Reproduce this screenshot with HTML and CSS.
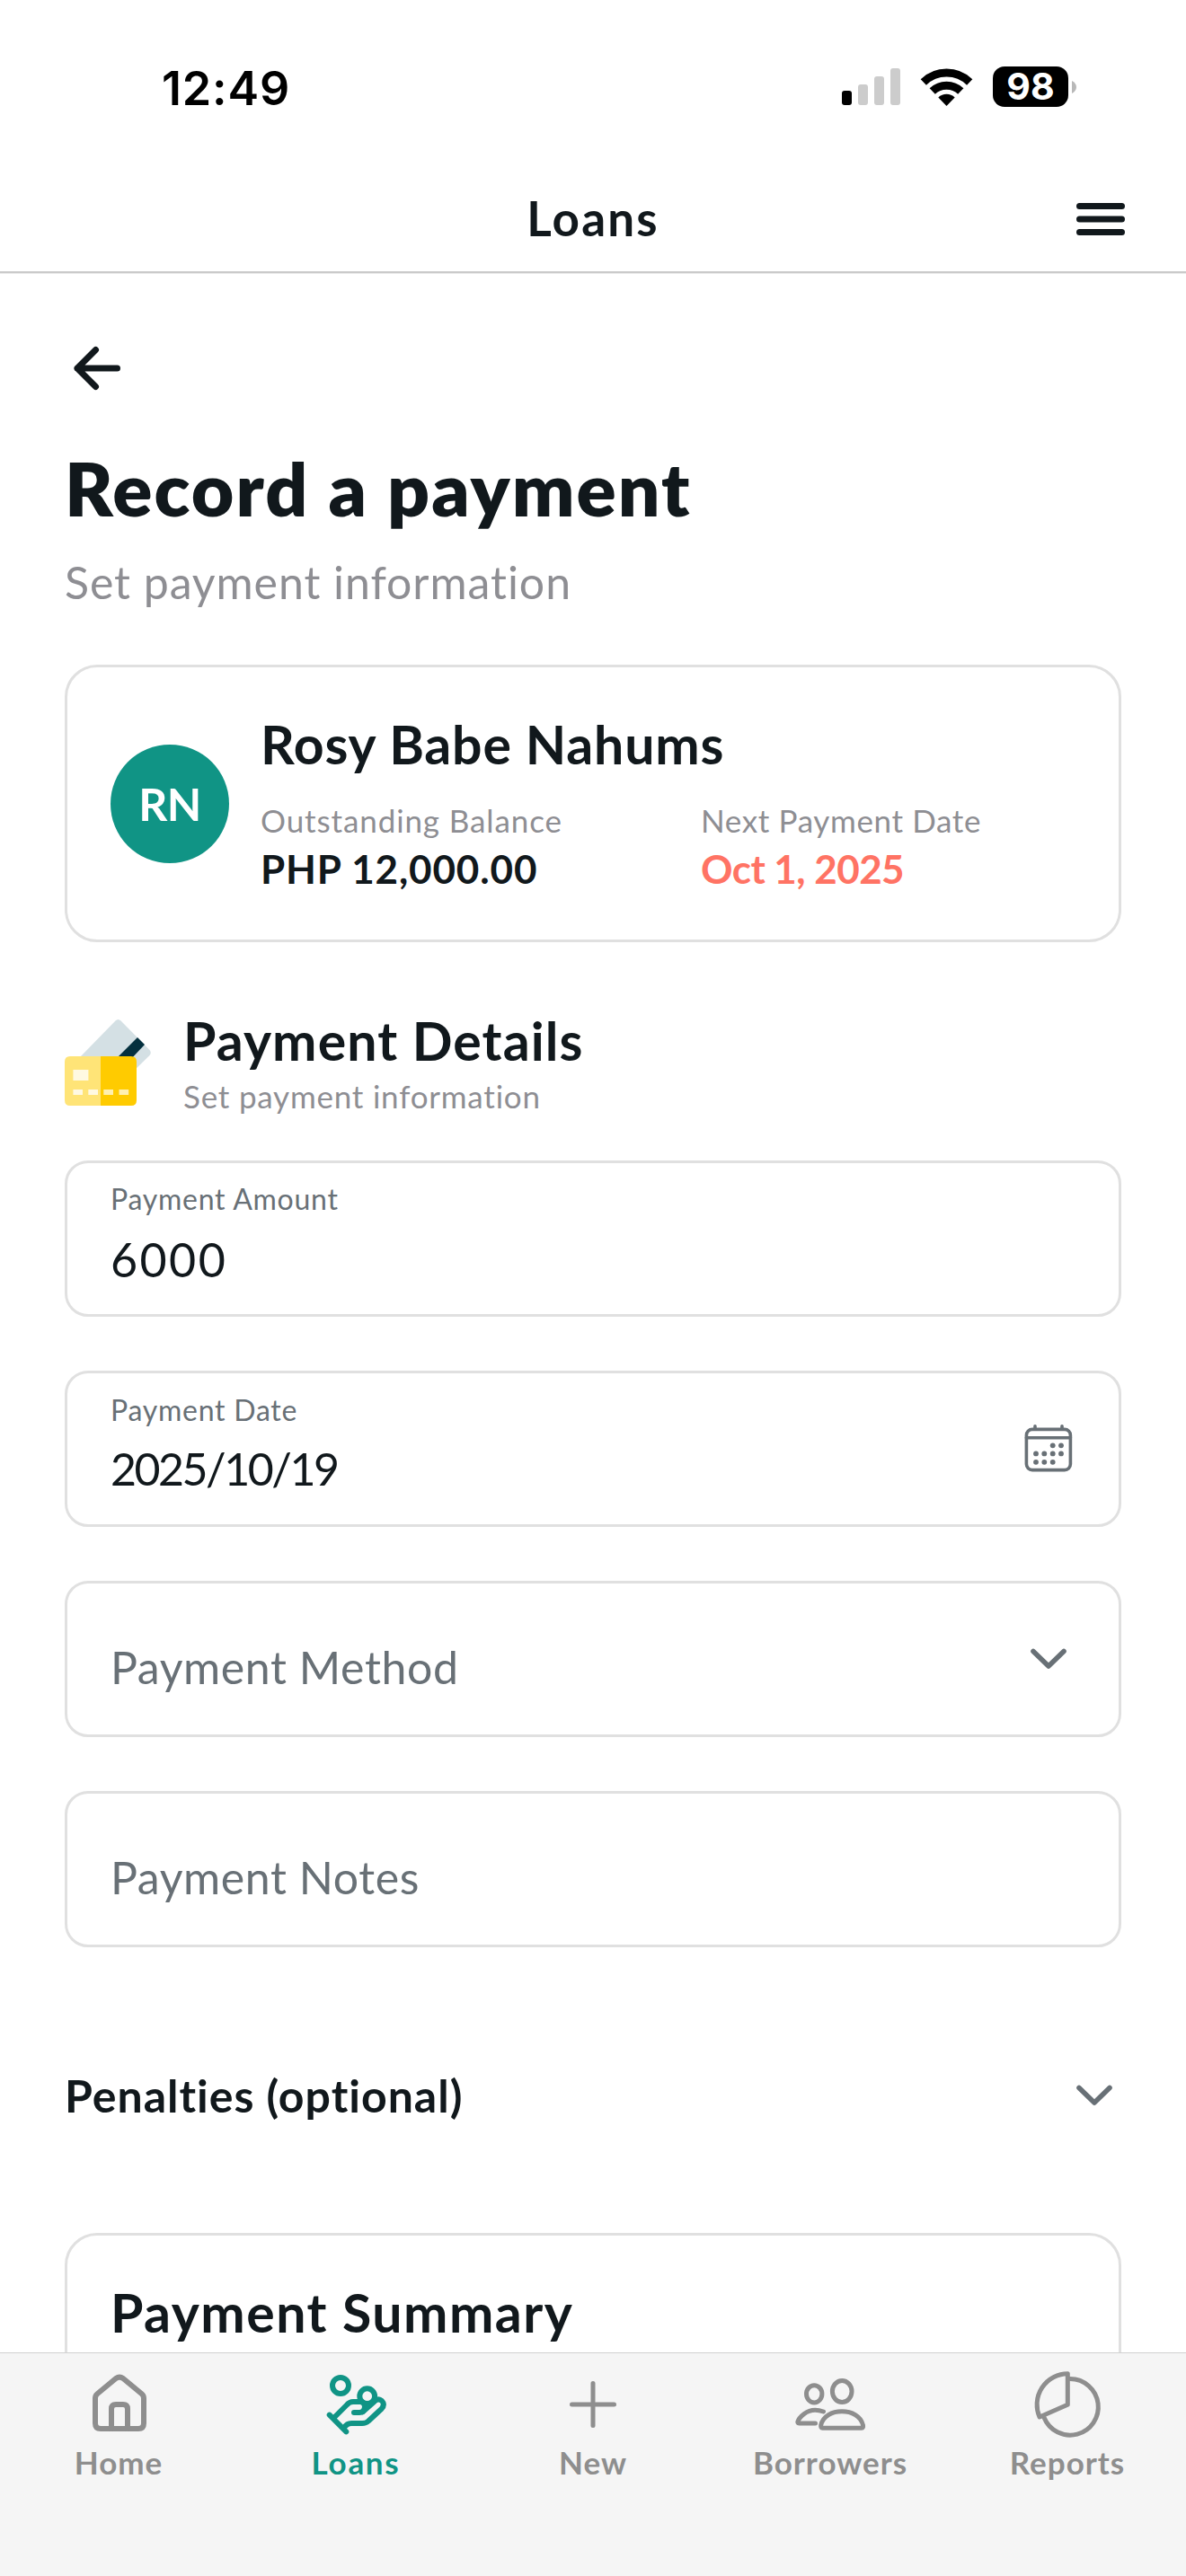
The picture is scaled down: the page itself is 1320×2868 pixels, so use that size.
FILE: index.html
```
<!DOCTYPE html>
<html lang="en">

<head>
    <meta charset="UTF-8">
    <meta name="viewport" content="width=device-width, initial-scale=1.0">
    <title>Loans - Record a payment</title>
    <link rel="stylesheet" href="styles.css">
</head>

<body>
    <div class="status-bar">
        <span class="time">12:49</span>
        <div class="status-icons">
            <svg class="signal" viewBox="0 0 65 41">
                <rect x="0" y="25" width="11" height="16" rx="3" />
                <g fill="#cccccc">
                    <rect x="18" y="18" width="11" height="23" rx="3" />
                    <rect x="36" y="9" width="11" height="32" rx="3" />
                    <rect x="54" y="0" width="11" height="41" rx="3" />
                </g>
            </svg>
            <svg class="wifi" viewBox="0 0 57 42">
                <g fill="none" stroke="#000000" stroke-width="9">
                    <path d="M2.8 15.4A37 37 0 0 1 54.2 15.4" />
                    <path d="M12.7 25.6A22.8 22.8 0 0 1 44.3 25.6" />
                </g>
                <path d="M28.5 42L19.3 32.4A13.3 13.3 0 0 1 37.7 32.4Z" />
            </svg>
            <div class="battery">
                <span class="battery-level">98</span>
                <svg class="battery-tip" viewBox="0 0 5 14">
                    <path d="M0 0C3 1.5 5 4 5 7S3 12.5 0 14Z" fill="#b8b8b8" />
                </svg>
            </div>
        </div>
    </div>

    <header class="header">
        <h1>Loans</h1>
        <svg class="menu" viewBox="0 0 54 36">
            <path d="M3.5 3.5H50.5M3.5 18H50.5M3.5 32.5H50.5" />
        </svg>
    </header>

    <main class="content">
        <svg class="back" viewBox="0 0 52 48">
            <path d="M24.5 3.5L4 24L24.5 44.5M4 24H48.5" />
        </svg>
        <h2 class="title">Record a payment</h2>
        <p class="subtitle">Set payment information</p>

        <section class="card borrower">
            <div class="avatar">RN</div>
            <div class="borrower-info">
                <h3>Rosy Babe Nahums</h3>
                <div class="borrower-stats">
                    <div>
                        <p class="stat-label balance-label">Outstanding Balance</p>
                        <p class="stat-value">PHP 12,000.00</p>
                    </div>
                    <div>
                        <p class="stat-label">Next Payment Date</p>
                        <p class="stat-value due">Oct 1, 2025</p>
                    </div>
                </div>
            </div>
        </section>

        <section class="section-head">
            <svg class="cards-icon" viewBox="0 0 96 96">
                <path d="M17 42L56.5 1.5Q59.5 -1.5 62.5 1.5L94.5 34Q97 37 94.5 40L70 64L40 60Z" fill="#d4e0e4" />
                <path d="M81 20L89 28L72 46L58 43Z" fill="#04303e" />
                <path d="M6 41H40V96H6Q0 96 0 90V47Q0 41 6 41Z" fill="#ffe477" />
                <path d="M40 41H74Q80 41 80 47V90Q80 96 74 96H40Z" fill="#ffcb00" />
                <path d="M9.4 56H26.4V68H9.4ZM9.4 78H20V84H9.4ZM26.3 78H37V84H26.3Z" fill="#fff9e2" />
                <path d="M43.3 78H54V84H43.3ZM60.5 78H71.2V84H60.5Z" fill="#fff0b0" />
            </svg>
            <div>
                <h3>Payment Details</h3>
                <p>Set payment information</p>
            </div>
        </section>

        <div class="fields">
            <div class="field">
                <div class="field-text">
                    <label>Payment Amount</label>
                    <span class="field-value amount">6000</span>
                </div>
            </div>
            <div class="field">
                <div class="field-text">
                    <label>Payment Date</label>
                    <span class="field-value date">2025/10/19</span>
                </div>
                <svg class="field-icon" viewBox="0 0 54 54">
                    <g fill="none" stroke="#687076" stroke-width="3.6" stroke-linecap="round">
                        <rect x="2.4" y="5.4" width="49" height="45.2" rx="6.5" />
                        <path d="M2.4 14.7H51.4M12 1.8V5M42 1.8V5" />
                    </g>
                    <g fill="#687076">
                        <circle cx="31.7" cy="23.3" r="2.9" />
                        <circle cx="41" cy="23.3" r="2.9" />
                        <circle cx="13" cy="32.4" r="2.9" />
                        <circle cx="22.3" cy="32.4" r="2.9" />
                        <circle cx="31.7" cy="32.4" r="2.9" />
                        <circle cx="41" cy="32.4" r="2.9" />
                        <circle cx="13" cy="41.8" r="2.9" />
                        <circle cx="22.3" cy="41.8" r="2.9" />
                        <circle cx="31.7" cy="41.8" r="2.9" />
                    </g>
                </svg>
            </div>
            <div class="field empty">
                <span class="placeholder">Payment Method</span>
                <svg class="field-icon chevron" viewBox="0 0 54 54">
                    <path d="M10 18.5L27 35L44 18.5" />
                </svg>
            </div>
            <div class="field empty">
                <span class="placeholder">Payment Notes</span>
            </div>
        </div>

        <section class="penalties">
            <h4>Penalties (optional)</h4>
            <svg class="field-icon chevron" viewBox="0 0 54 54">
                <path d="M10 18.5L27 35L44 18.5" />
            </svg>
        </section>

        <section class="card summary">
            <h3>Payment Summary</h3>
        </section>
    </main>

    <nav class="tab-bar">
        <a class="tab home">
            <svg viewBox="32 12 80 80">
                <path d="M46 50Q46 47 48.5 45L69 28Q73 25.3 77 28L97.5 45Q100 47 100 50V78Q100 84 94 84H52Q46 84 46 78Z" />
                <path d="M64 84V62Q64 57 69 57H77Q82 57 82 62V84" />
            </svg>
            <span>Home</span>
        </a>
        <a class="tab loans active">
            <svg viewBox="296 12 80 80">
                <circle cx="319" cy="36" r="9" />
                <circle cx="348.7" cy="47.7" r="8.4" />
                <path d="M306.7 68.7L325.3 87.3" />
                <path d="M312 71.5L326 57.5Q329 54 333 54H341Q346 54 346 59.5Q345.5 66 340 66H334" />
                <path d="M344 65L357 53.5Q361 49.5 365 53Q369 57 364.5 62L350 75.5Q347.5 78 343 78H331Q326 78 323 83" />
            </svg>
            <span>Loans</span>
        </a>
        <a class="tab new">
            <svg viewBox="0 0 80 80">
                <path d="M16.5 45H63.5M40 21.5V68.5" stroke-width="5" />
            </svg>
            <span>New</span>
        </a>
        <a class="tab borrowers">
            <svg viewBox="24 12 80 80">
                <g stroke-width="5">
                    <ellipse cx="46.2" cy="45.3" rx="8.7" ry="9.6" />
                    <ellipse cx="77.2" cy="42.5" rx="10.8" ry="12" />
                    <path d="M56.5 65Q44 60.5 35 67.5Q29 72 27.8 76.5Q27.6 78 30 78H47.5" />
                    <path d="M55.5 83.3H99Q101 83.3 100.5 80C98 70 88 64.8 77 64.8C66 64.8 56 70 53.7 80Q53.4 83.3 55.5 83.3Z" />
                </g>
            </svg>
            <span>Borrowers</span>
        </a>
        <a class="tab reports">
            <svg viewBox="288 12 80 80">
                <g stroke-width="5">
                    <path d="M331 28.5A31.3 31.3 0 1 1 302 71.5" />
                    <path d="M328.3 57.3V22.7A34.5 34.5 0 0 0 297 71Z" />
                </g>
            </svg>
            <span>Reports</span>
        </a>
    </nav>
</body>

</html>
```
FILE: styles.css
```
* {
    box-sizing: border-box;
}

body {
    margin: 0px;
    height: 2868px;
    display: flex;
    flex-direction: column;
    overflow: hidden;
    background: #ffffff;
    color: #11181c;
    font-family: Lato, sans-serif;
}

h1, h2, h3, h4, p {
    margin: 0px;
}

svg {
    display: block;
    flex: none;
    overflow: visible;
}

/* status bar */

.status-bar {
    height: 193px;
    padding: 0px 122px 0px 180px;
    display: flex;
    align-items: center;
    justify-content: space-between;
    flex: none;
    color: #000000;
    font-family: Inter, sans-serif;
}

.time {
    padding-top: 3px;
    font-size: 52px;
    font-weight: 600;
    letter-spacing: 0.85px;
}

.status-icons {
    display: flex;
    align-items: center;
}

.signal {
    width: 65px;
    height: 41px;
}

.wifi {
    width: 57px;
    height: 42px;
    margin: 0px 23px;
}

.battery {
    display: flex;
    align-items: center;
    gap: 4px;
}

.battery-level {
    width: 84px;
    height: 45px;
    border-radius: 13px;
    background: #000000;
    color: #ffffff;
    font-size: 41px;
    font-weight: 700;
    line-height: 45px;
    text-align: center;
}

.battery-tip {
    width: 5px;
    height: 14px;
}

/* header */

.header {
    height: 111px;
    padding: 0px 68px 9px;
    display: grid;
    grid-template-columns: 1fr auto 1fr;
    align-items: center;
    flex: none;
    border-bottom: 2px solid #cacaca;
    box-shadow: 0px 1px 0px #ebebeb;
}

.header h1 {
    grid-column: 2;
    font-size: 53px;
    font-weight: 700;
    line-height: 60px;
    letter-spacing: 2.2px;
}

.menu {
    width: 54px;
    height: 36px;
    justify-self: end;
    margin-top: 2px;
}

.menu path,
.back path {
    fill: none;
    stroke: #11181c;
    stroke-width: 7;
    stroke-linecap: round;
    stroke-linejoin: round;
}

/* content */

.content {
    flex: 1;
    min-height: 0px;
    overflow: hidden;
    padding: 82px 72px 0px;
}

.back {
    width: 52px;
    height: 48px;
    margin-left: 10px;
}

.title {
    margin-top: 64px;
    font-size: 82px;
    font-weight: 800;
    line-height: 90px;
    letter-spacing: 2.1px;
}

.subtitle {
    margin-top: 30px;
    color: #8e8e93;
    font-size: 50px;
    line-height: 60px;
    letter-spacing: 0.94px;
}

.card {
    border: 3px solid #e0e0e0;
    border-radius: 36px;
    padding: 51px 48px;
}

.card h3,
.section-head h3 {
    font-size: 59px;
    font-weight: 700;
    line-height: 70px;
    letter-spacing: 1.1px;
}

.borrower {
    margin-top: 62px;
    height: 309px;
    display: flex;
    align-items: center;
    gap: 35px;
}

.avatar {
    width: 132px;
    height: 132px;
    border-radius: 50%;
    flex: none;
    background: #109485;
    color: #ffffff;
    font-size: 50px;
    font-weight: 700;
    line-height: 133px;
    text-align: center;
    letter-spacing: -0.5px;
}

.borrower-info {
    flex: 1;
    align-self: flex-start;
}

.card.borrower h3 {
    letter-spacing: 0.8px;
}

.borrower-stats {
    margin-top: 27px;
    display: grid;
    grid-template-columns: 490px 1fr;
}

.stat-label {
    color: #8e8e93;
    font-size: 35px;
    line-height: 44px;
    letter-spacing: 0.64px;
}

.balance-label {
    letter-spacing: 0.89px;
}

.stat-value {
    margin-top: 7px;
    font-size: 44px;
    font-weight: 700;
    line-height: 50px;
    letter-spacing: 0.85px;
}

.due {
    color: #ff7364;
    letter-spacing: -0.55px;
}

.section-head {
    margin-top: 74px;
    display: flex;
    align-items: center;
    gap: 36px;
}

.section-head h3 {
    padding-top: 1px;
    line-height: 69px;
}

.cards-icon {
    width: 96px;
    height: 96px;
}

.section-head p {
    margin-top: 5px;
    color: #8e8e93;
    font-size: 35px;
    line-height: 44px;
    letter-spacing: 0.79px;
}

.fields {
    margin-top: 50px;
    display: flex;
    flex-direction: column;
    gap: 60px;
}

.field {
    height: 174px;
    padding: 0px 48px;
    display: flex;
    align-items: center;
    justify-content: space-between;
    border: 3px solid #e0e0e0;
    border-radius: 26px;
}

.field-text {
    display: flex;
    flex-direction: column;
    gap: 17px;
    padding-bottom: 11px;
}

.field-text label {
    color: #687076;
    font-size: 32px;
    line-height: 40px;
    letter-spacing: 0.75px;
}

.field-value {
    font-size: 50px;
    line-height: 60px;
}

.amount {
    font-size: 52px;
    letter-spacing: 2.4px;
}

.date {
    margin-top: -2px;
    letter-spacing: -2.47px;
}

.placeholder {
    padding-top: 17px;
    color: #687076;
    font-size: 50px;
    line-height: 60px;
    letter-spacing: 0.6px;
}

.field-icon {
    width: 54px;
    height: 54px;
    margin-right: 3px;
}

.chevron path {
    fill: none;
    stroke: #687076;
    stroke-width: 5.6;
    stroke-linecap: round;
    stroke-linejoin: round;
}

.penalties {
    margin-top: 135px;
    display: flex;
    align-items: center;
    justify-content: space-between;
}

.penalties h4 {
    font-size: 50px;
    font-weight: 700;
    line-height: 60px;
    letter-spacing: 1px;
}

.summary {
    margin-top: 123px;
    height: 600px;
}

.summary h3 {
    letter-spacing: 1.5px;
}

/* tab bar */

.tab-bar {
    height: 249px;
    flex: none;
    display: flex;
    border-top: 1px solid #d2d2d2;
    background: #f5f5f5;
}

.tab {
    flex: 1;
    padding-top: 12px;
    display: flex;
    flex-direction: column;
    align-items: center;
    gap: 7px;
    color: #8e8e8e;
    font-size: 35px;
    font-weight: 700;
    line-height: 44px;
    letter-spacing: 1px;
}

.tab svg {
    width: 80px;
    height: 80px;
    fill: none;
    stroke: currentColor;
    stroke-width: 6;
    stroke-linecap: round;
    stroke-linejoin: round;
}

.tab.active {
    color: #109485;
    letter-spacing: 1.7px;
}
```
